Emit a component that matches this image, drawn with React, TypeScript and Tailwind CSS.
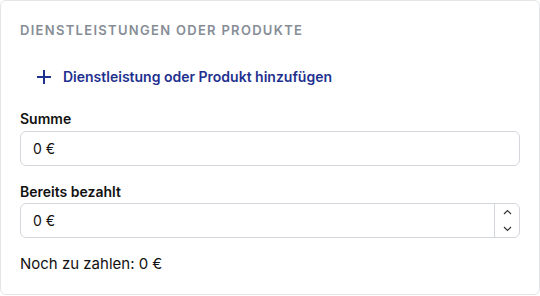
import { useState } from "react";

export default function App() {
  const [paid, setPaid] = useState(0);

  return (
    <div className="w-[540px] h-[296px] bg-white" style={{ fontFamily: "Inter, 'Noto Sans', sans-serif" }}>
      <div className="h-[295px] rounded-md border border-[#e3e5e8] bg-white px-[19px] pt-[19px]">
        {/* Title */}
        <h2 className="text-[13px] leading-5 font-semibold uppercase tracking-[0.1em] text-[#878d96]">
          Dienstleistungen oder Produkte
        </h2>

        {/* Add */}
        <button className="mt-[26px] ml-[16px] flex items-center gap-[11px] text-[14px] font-semibold text-[#1f318f]">
          <svg width="16" height="16" viewBox="0 0 16 16" fill="none" stroke="currentColor" strokeWidth="2">
            <path d="M8 1v14M1 8h14" />
          </svg>
          Dienstleistung oder Produkt hinzufügen
        </button>

        {/* Summe */}
        <div className="mt-[22px]">
          <label className="block text-[14px] leading-5 font-semibold text-[#111]">Summe</label>
          <div className="mt-[2px] flex h-[35px] items-center rounded-md border border-[#d3d7dc] px-3 text-[14px] text-[#111]">
            0 €
          </div>
        </div>

        {/* Bereits bezahlt */}
        <div className="mt-[16px]">
          <label className="block text-[14px] leading-5 font-semibold text-[#111]">Bereits bezahlt</label>
          <div className="mt-[1px] flex h-[35px] items-center rounded-md border border-[#d3d7dc] text-[14px] text-[#111]">
            <div className="flex-1 px-3">{paid} €</div>
            <div className="flex h-full w-[25px] flex-col items-center justify-center border-l border-[#d3d7dc] text-[#333]">
              <button onClick={() => setPaid(paid + 1)} className="flex h-[17px] items-center">
                <svg width="9" height="6" viewBox="0 0 9 6" fill="none" stroke="currentColor" strokeWidth="1.2">
                  <path d="M1 5l3.5-3.5L8 5" />
                </svg>
              </button>
              <button onClick={() => setPaid(Math.max(0, paid - 1))} className="flex h-[17px] items-center">
                <svg width="9" height="6" viewBox="0 0 9 6" fill="none" stroke="currentColor" strokeWidth="1.2">
                  <path d="M1 1l3.5 3.5L8 1" />
                </svg>
              </button>
            </div>
          </div>
        </div>

        {/* Rest */}
        <p className="mt-[16px] text-[15px] leading-5 text-[#111]">Noch zu zahlen: 0 €</p>
      </div>
    </div>
  );
}
